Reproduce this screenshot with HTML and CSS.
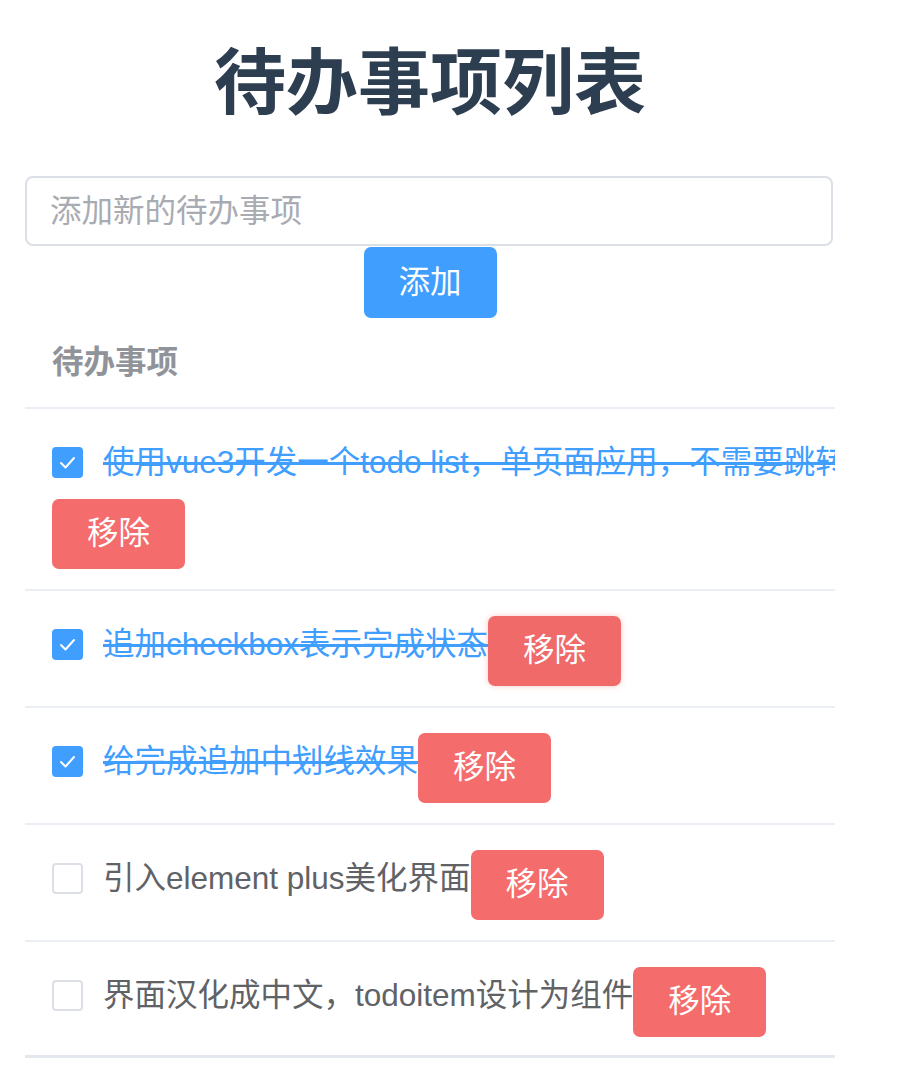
FILE: index.html
```html
<!DOCTYPE html>
<html lang="zh-CN">
<head>
<meta charset="utf-8">
<title>待办事项列表</title>
<link rel="stylesheet" href="styles.css">
</head>
<body>
<div class="app">
  <h1 class="title">待办事项列表</h1>
  <div class="add-form">
    <input class="add-input" type="text" placeholder="添加新的待办事项">
    <button class="btn btn-primary">添加</button>
  </div>
  <div class="list-header">待办事项</div>
  <ul class="todo-list">
    <li class="todo-item">
      <label class="todo-check done">
        <span class="box checked"><svg viewBox="0 0 31 31" width="31" height="31"><polyline points="9,16 13.5,20.5 22,11" fill="none" stroke="#fff" stroke-width="2" stroke-linecap="round" stroke-linejoin="round"/></svg></span>
        <span class="text">使用vue3开发一个todo list，单页面应用，不需要跳转</span>
      </label>
      <button class="btn btn-danger">移除</button>
    </li>
    <li class="todo-item">
      <label class="todo-check done">
        <span class="box checked"><svg viewBox="0 0 31 31" width="31" height="31"><polyline points="9,16 13.5,20.5 22,11" fill="none" stroke="#fff" stroke-width="2" stroke-linecap="round" stroke-linejoin="round"/></svg></span>
        <span class="text">追加checkbox表示完成状态</span>
      </label>
      <button class="btn btn-danger hovered">移除</button>
    </li>
    <li class="todo-item">
      <label class="todo-check done">
        <span class="box checked"><svg viewBox="0 0 31 31" width="31" height="31"><polyline points="9,16 13.5,20.5 22,11" fill="none" stroke="#fff" stroke-width="2" stroke-linecap="round" stroke-linejoin="round"/></svg></span>
        <span class="text">给完成追加中划线效果</span>
      </label>
      <button class="btn btn-danger">移除</button>
    </li>
    <li class="todo-item">
      <label class="todo-check">
        <span class="box"></span>
        <span class="text">引入element plus美化界面</span>
      </label>
      <button class="btn btn-danger">移除</button>
    </li>
    <li class="todo-item last">
      <label class="todo-check">
        <span class="box"></span>
        <span class="text">界面汉化成中文，todoitem设计为组件</span>
      </label>
      <button class="btn btn-danger">移除</button>
    </li>
  </ul>
</div>
</body>
</html>
```

FILE: styles.css
```css
* {
  box-sizing: border-box;
}

html, body {
  margin: 0;
  padding: 0;
  background: #ffffff;
}

body {
  font-family: "Liberation Sans", "Noto Sans CJK SC", sans-serif;
  color: #606266;
}

.app {
  width: 810px;
  margin-left: 25px;
}

.title {
  margin: 40px 0 0;
  font-size: 72px;
  line-height: 86px;
  font-weight: 700;
  color: #2c3e50;
  text-align: center;
}

.add-form {
  margin-top: 50px;
  display: flex;
  flex-direction: column;
  align-items: center;
}

.add-input {
  width: 808px;
  align-self: flex-start;
  height: 70px;
  border: 2px solid #dcdfe6;
  border-radius: 8px;
  padding: 0 23px;
  font-family: inherit;
  font-size: 31.5px;
  color: #606266;
  outline: none;
  background: #fff;
}

.add-input::placeholder {
  color: #a8abb2;
}

.btn {
  border: none;
  border-radius: 7px;
  height: 70px;
  padding: 0 35px;
  font-family: inherit;
  font-size: 31.5px;
  line-height: 1;
  color: #ffffff;
  cursor: pointer;
}

.btn-primary {
  margin-top: 1px;
  height: 71px;
  width: 133px;
  background: #409eff;
}

.btn-danger {
  width: 133px;
  background: #f56c6c;
  flex: none;
}

.btn-danger.hovered {
  background: #f06a6a;
  box-shadow: 0 0 6px rgba(245, 108, 108, 0.35);
}

.list-header {
  padding: 24px 27px 25px;
  font-size: 31.5px;
  line-height: 40px;
  font-weight: 700;
  color: #909399;
  border-bottom: 2px solid #ebeef5;
}

.todo-list {
  list-style: none;
  margin: 0;
  padding: 0;
}

.todo-item {
  display: flex;
  flex-wrap: wrap;
  align-items: flex-start;
  row-gap: 17px;
  padding: 25px 27px 20px;
  border-bottom: 2px solid #ebeef5;
  overflow: hidden;
}

.todo-item.last {
  border-bottom: 3px solid #e4e7ed;
  padding-bottom: 18px;
}

.todo-check {
  display: flex;
  align-items: center;
  height: 40px;
  margin-top: 8px;
  white-space: nowrap;
  flex: none;
  cursor: pointer;
}

.box {
  width: 31px;
  height: 31px;
  border: 2px solid #dcdfe6;
  border-radius: 4px;
  background: #fff;
  margin-right: 20px;
  flex: none;
  display: flex;
  align-items: center;
  justify-content: center;
  overflow: hidden;
}

.box.checked {
  border: none;
  background: #409eff;
}

.box svg {
  display: block;
}

.text {
  font-size: 31.5px;
  line-height: 40px;
  color: #606266;
}

.done .text {
  color: #409eff;
  text-decoration: line-through;
  text-decoration-thickness: 3px;
}
```
